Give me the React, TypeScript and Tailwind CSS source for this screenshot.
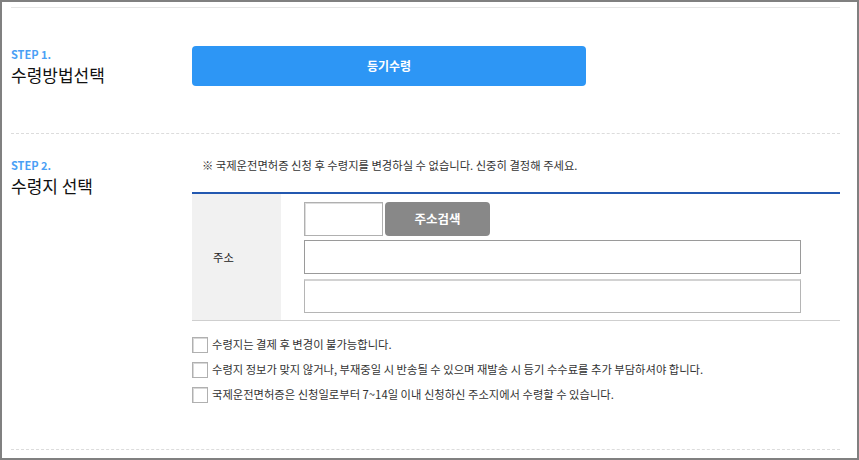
const font = "font-['Noto_Sans_CJK_KR','Noto_Sans',sans-serif]"

function Check(props: { text: string }) {
  return (
    <label className="flex items-center h-[25px] gap-[4px]">
      <span className="w-[16px] h-[16px] border border-[#b0b0b0] shadow-[inset_1px_1px_0_#d8d8d8] bg-white shrink-0" />
      <span className="text-[11.3px] text-[#333] leading-none">{props.text}</span>
    </label>
  )
}

export default function App() {
  return (
    <div className={`w-[859px] h-[460px] border-2 border-[#808080] bg-white pt-[5px] pl-[9px] pr-[17px] pb-[8px] ${font}`}>
      <div className="border-t border-[#e6e6e6]" />

      {/* step 1 */}
      <div className="flex h-[126px] border-b border-dashed border-[#dcdcdc]">
        <div className="w-[181px] pt-[39px]">
          <p className="text-[11px] leading-[14px] font-bold text-[#4aa0f5]">STEP 1.</p>
          <p className="mt-[3px] text-[17px] leading-[22px] text-[#111]">수령방법선택</p>
        </div>
        <div className="pt-[38px]">
          <button className="w-[394px] h-[40px] rounded-[4px] bg-[#2d96f5] text-white text-[12px] font-bold">등기수령</button>
        </div>
      </div>

      {/* step 2 */}
      <div className="flex h-[316px] border-b border-dashed border-[#dcdcdc]">
        <div className="w-[181px] pt-[24px]">
          <p className="text-[11px] leading-[14px] font-bold text-[#4aa0f5]">STEP 2.</p>
          <p className="mt-[3px] text-[17px] leading-[22px] text-[#111]">수령지 선택</p>
        </div>
        <div className="flex-1 pt-[23px]">
          <p className="pl-[10px] text-[11.3px] leading-[16px] text-[#333]">※ 국제운전면허증 신청 후 수령지를 변경하실 수 없습니다. 신중히 결정해 주세요.</p>

          <div className="mt-[19px] flex border-t-2 border-[#2358b0] border-b border-b-[#cfcfcf]">
            <div className="w-[89px] bg-[#f1f1f1] flex items-center pl-[21px] text-[11.3px] text-[#222]">주소</div>
            <div className="pl-[23px] pt-[8px] pb-[7px] flex flex-col">
              <div className="flex gap-[2px]">
                <input className="w-[79px] h-[34px] border border-[#b0b0b0] shadow-[inset_1px_1px_0_#ddd] outline-none" />
                <button className="w-[105px] h-[34px] rounded-[4px] bg-[#888888] text-white text-[12.5px] font-bold">주소검색</button>
              </div>
              <input className="mt-[4px] w-[497px] h-[34px] border border-[#9a9a9a] outline-none" />
              <input className="mt-[5px] w-[497px] h-[34px] border border-[#b5b5b5] border-t-2 border-t-[#d2d2d2] outline-none" />
            </div>
          </div>

          <div className="mt-[11px] flex flex-col">
            <Check text="수령지는 결제 후 변경이 불가능합니다." />
            <Check text="수령지 정보가 맞지 않거나, 부재중일 시 반송될 수 있으며 재발송 시 등기 수수료를 추가 부담하셔야 합니다." />
            <Check text="국제운전면허증은 신청일로부터 7~14일 이내 신청하신 주소지에서 수령할 수 있습니다." />
          </div>
        </div>
      </div>
    </div>
  )
}
